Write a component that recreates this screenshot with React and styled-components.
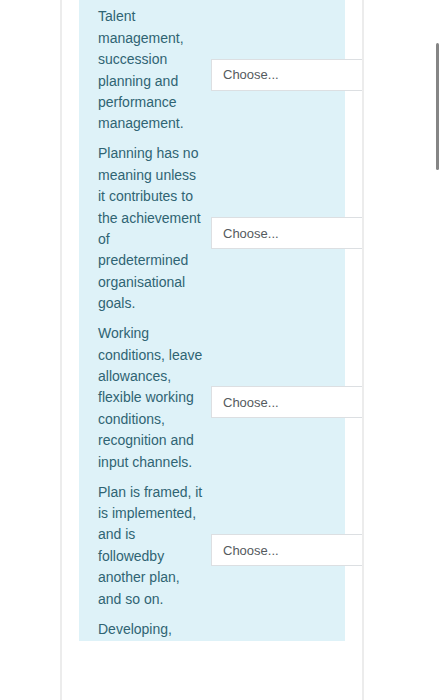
import styled, { createGlobalStyle } from "styled-components";

const GlobalStyle = createGlobalStyle`
  html, body {
    margin: 0;
    padding: 0;
    background: #ffffff;
    font-family: "Liberation Sans", Arial, sans-serif;
    overflow: hidden;
  }
`;

const Panel = styled.div`
  box-sizing: border-box;
  margin-left: 60px;
  width: 304px;
  min-height: 700px;
  border-left: 2px solid #ececec;
  border-right: 2px solid #ececec;
  padding: 0 17px;
  overflow: hidden;
`;

const Formulation = styled.div`
  background: #def2f8;
  color: #2f6473;
  padding: 6.3px 0 1px 19px;
`;

const Row = styled.div`
  display: flex;
  align-items: center;
`;

const Prompt = styled.div`
  flex: 0 0 105px;
  font-size: 14px;
  line-height: 21.4px;
  padding-bottom: ${({ $last }) => ($last ? "0" : "8.6px")};
`;

const Control = styled.div`
  flex: 0 0 auto;
  margin-left: 8px;
`;

const Select = styled.select`
  appearance: none;
  box-sizing: border-box;
  width: 170px;
  height: 32px;
  padding: 0 11px;
  border: 1px solid #dcdfe2;
  border-radius: 0;
  background: #ffffff;
  color: #555a5e;
  font-family: "Liberation Sans", Arial, sans-serif;
  font-size: 13px;
  outline: none;
`;

const Scrollbar = styled.div`
  position: fixed;
  left: 436px;
  top: 43px;
  width: 3px;
  height: 127px;
  border-radius: 2px;
  background: #858585;
`;

const items = [
  "Talent management, succession planning and performance management.",
  "Planning has no meaning unless it contributes to the achievement of predetermined organisational goals.",
  "Working conditions, leave allowances, flexible working conditions, recognition and input channels.",
  "Plan is framed, it is implemented, and is followedby another plan, and so on.",
];

export default function App() {
  return (
    <>
      <GlobalStyle />
      <Panel>
        <Formulation>
          {items.map((text) => (
            <Row key={text}>
              <Prompt>{text}</Prompt>
              <Control>
                <Select defaultValue="">
                  <option value="">Choose...</option>
                </Select>
              </Control>
            </Row>
          ))}
          <Row>
            <Prompt $last>Developing,</Prompt>
          </Row>
        </Formulation>
      </Panel>
      <Scrollbar />
    </>
  );
}
